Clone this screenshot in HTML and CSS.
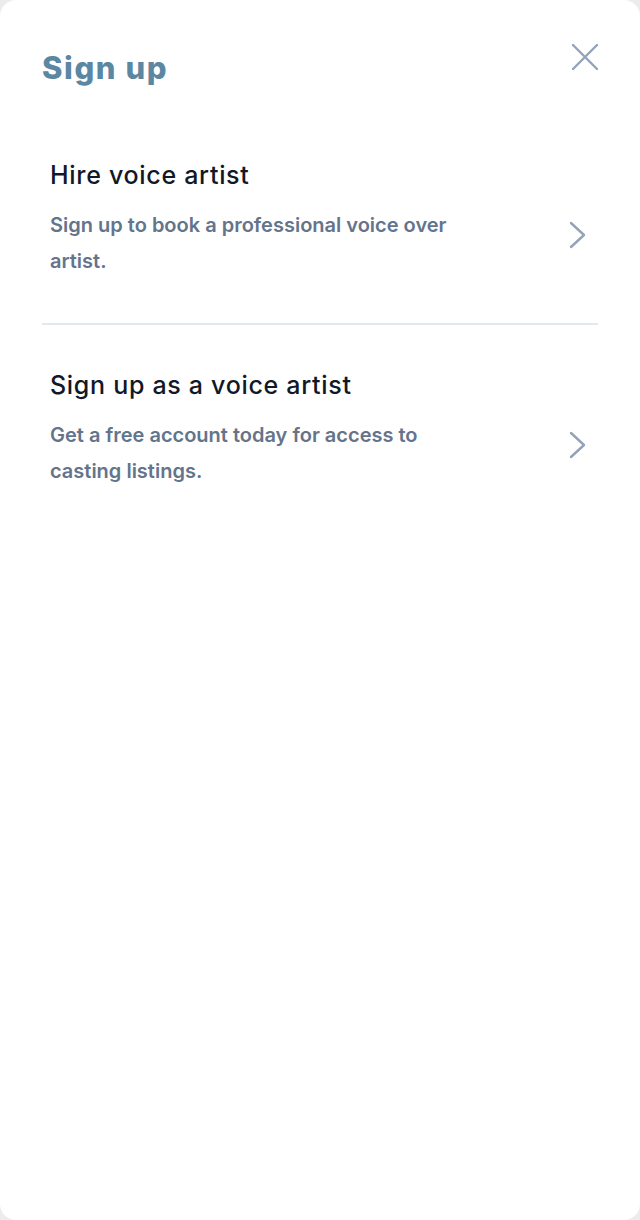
FILE: index.html
```html
<!DOCTYPE html>
<html lang="en">
<head>
<meta charset="utf-8">
<title>Sign up</title>
<link rel="stylesheet" href="styles.css">
</head>
<body>
<div class="card">
  <header class="head">
    <h1 class="title">Sign up</h1>
    <button class="close" aria-label="Close">
      <svg width="26" height="26" viewBox="0 0 26 26"><path d="M1 1 L25 25 M25 1 L1 25" stroke="#94a3b8" stroke-width="2.4" stroke-linecap="round" fill="none"/></svg>
    </button>
  </header>
  <a class="option" href="#">
    <div class="text">
      <div class="opt-title">Hire voice artist</div>
      <div class="opt-desc">Sign up to book a professional voice over artist.</div>
    </div>
    <svg class="chev" width="17" height="28" viewBox="0 0 17 28"><path d="M2 2 L15 14 L2 26" stroke="#94a3b8" stroke-width="2.4" stroke-linecap="round" stroke-linejoin="round" fill="none"/></svg>
  </a>
  <div class="divider"></div>
  <a class="option" href="#">
    <div class="text">
      <div class="opt-title">Sign up as a voice artist</div>
      <div class="opt-desc">Get a free account today for access to casting listings.</div>
    </div>
    <svg class="chev" width="17" height="28" viewBox="0 0 17 28"><path d="M2 2 L15 14 L2 26" stroke="#94a3b8" stroke-width="2.4" stroke-linecap="round" stroke-linejoin="round" fill="none"/></svg>
  </a>
</div>
</body>
</html>
```
FILE: styles.css
```css
html, body {
  margin: 0;
  padding: 0;
  background: #ececec;
}
body {
  font-family: "Inter", "Open Sans", sans-serif;
}
.card {
  box-sizing: border-box;
  width: 640px;
  height: 1220px;
  background: #ffffff;
  border-radius: 16px;
  padding: 44px 42px 0 42px;
}
.head {
  display: flex;
  justify-content: space-between;
  align-items: flex-start;
  margin-bottom: 71px;
}
.title {
  margin: 4px 0 0 0;
  font-size: 31px;
  font-weight: 800;
  color: #5b87a3;
  line-height: 40px;
  letter-spacing: 1.6px;
}
.close {
  background: none;
  border: 0;
  padding: 0;
  margin: 0;
  width: 26px;
  height: 26px;
  cursor: pointer;
}
.close svg { display: block; }
.option {
  display: flex;
  align-items: flex-start;
  justify-content: space-between;
  text-decoration: none;
  padding: 0 12px 0 8px;
}
.text { width: 420px; }
.opt-title {
  font-size: 25px;
  font-weight: 500;
  color: #111827;
  line-height: 32px;
  letter-spacing: 0.7px;
  margin-bottom: 16px;
}
.opt-desc {
  font-size: 20px;
  font-weight: 600;
  color: #64748b;
  line-height: 36px;
}
.chev { display: block; flex: none; margin-top: 62px; }
.divider {
  height: 2px;
  background: #e2e8f0;
  margin: 44px 0 44px 0;
}
```
